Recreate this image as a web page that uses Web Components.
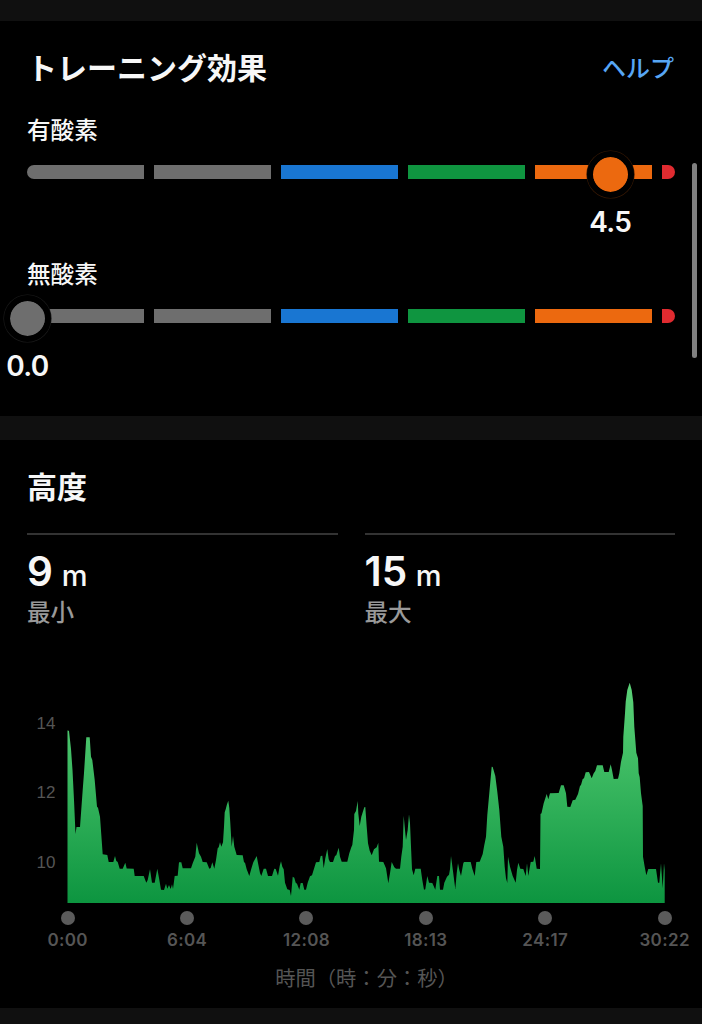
<!DOCTYPE html>
<html lang="ja">
<head>
<meta charset="utf-8">
<title>トレーニング効果</title>
<style>
    body {
        margin: 0;
        background: #000;
        color: #f7f7f7;
        font-family: Inter, "Noto Sans CJK JP", sans-serif;
    }
</style>
</head>
<body>
<activity-page>
    <stat-section heading="トレーニング効果" class="effect">
        <a slot="action">ヘルプ</a>
        <effect-meter label="有酸素" value="4.5" color="#ec690f"></effect-meter>
        <effect-meter label="無酸素" value="0.0" color="#6e6e6e"></effect-meter>
    </stat-section>
    <stat-section heading="高度" class="altitude">
        <stat-pair>
            <stat-value value="9" unit="m">最小</stat-value>
            <stat-value value="15" unit="m">最大</stat-value>
        </stat-pair>
        <altitude-chart>時間（時：分：秒）</altitude-chart>
    </stat-section>
</activity-page>

<script>
class ActivityPage extends HTMLElement {
    constructor() {
        super();
        this.attachShadow({ mode: 'open' });
    }

    connectedCallback() {
        this.shadowRoot.innerHTML = `
            <style>
                :host {
                    display: flex;
                    flex-direction: column;
                    gap: 24px;
                    position: relative;
                    box-sizing: border-box;
                    height: 1024px;
                    padding: 21px 0 16px;
                    background: #101010;
                    overflow: hidden;
                }
                ::slotted(.effect) {
                    height: 395px;
                }
                ::slotted(.altitude) {
                    height: 568px;
                }
                .scrollbar {
                    position: absolute;
                    top: 163px;
                    right: 5px;
                    width: 5.5px;
                    height: 195px;
                    border-radius: 3px;
                    background: #808080;
                }
            </style>
            <slot></slot>
            <div class="scrollbar"></div>
        `;
    }
}

class StatSection extends HTMLElement {
    constructor() {
        super();
        this.attachShadow({ mode: 'open' });
    }

    connectedCallback() {
        this.shadowRoot.innerHTML = `
            <style>
                :host {
                    display: block;
                    box-sizing: border-box;
                    padding: 27px 27px 0;
                    background: #000;
                }
                header {
                    display: flex;
                    justify-content: space-between;
                    align-items: center;
                    height: 40px;
                }
                h2 {
                    margin: 0;
                    font-size: 30px;
                    line-height: 40px;
                    font-weight: 700;
                }
                ::slotted(a) {
                    padding: 2px 1px 0 0;
                    font-size: 24px;
                    line-height: 40px;
                    font-weight: 500;
                    color: #57a6f5;
                }
            </style>
            <header>
                <h2>${this.getAttribute('heading')}</h2>
                <slot name="action"></slot>
            </header>
            <slot></slot>
        `;
    }
}

class EffectMeter extends HTMLElement {
    constructor() {
        super();
        this.attachShadow({ mode: 'open' });
    }

    connectedCallback() {
        const value = this.getAttribute('value');
        const color = this.getAttribute('color');
        // full scale is 5.0, the red cap starts just after it
        const left = Number(value) / 5 * 647.5;
        this.shadowRoot.innerHTML = `
            <style>
                :host {
                    display: block;
                    height: 144px;
                }
                .label {
                    height: 32px;
                    padding: 27px 0 18px;
                    font-size: 23.6px;
                    line-height: 32px;
                    font-weight: 500;
                }
                .track {
                    position: relative;
                    display: flex;
                    gap: 9.6px;
                    height: 14px;
                }
                .track i {
                    flex: 1;
                    background: #6e6e6e;
                }
                .track i:nth-child(1) { border-radius: 7px 0 0 7px; }
                .track i:nth-child(3) { background: #1976d2; }
                .track i:nth-child(4) { background: #0f9540; }
                .track i:nth-child(5) { background: #ec690f; }
                .track i:nth-child(6) {
                    flex: 0 0 13px;
                    border-radius: 0 7px 7px 0;
                    background: #e02b30;
                }
                .knob {
                    position: absolute;
                    top: -14.5px;
                    box-sizing: border-box;
                    width: 47px;
                    height: 47px;
                    margin-left: -23.2px;
                    border: 6px solid #000;
                    border-radius: 50%;
                    background: ${color};
                    background-clip: padding-box;
                    box-shadow: 0 0 0 0.6px color-mix(in srgb, ${color} 25%, #000);
                }
                .value {
                    position: absolute;
                    top: 40px;
                    width: 80px;
                    margin-left: -39.5px;
                    text-align: center;
                    font-size: 28px;
                    line-height: 34px;
                    font-weight: 600;
                    letter-spacing: -0.6px;
                }
            </style>
            <div class="label">${this.getAttribute('label')}</div>
            <div class="track">
                <i></i><i></i><i></i><i></i><i></i><i></i>
                <div class="knob" style="left: ${left}px"></div>
                <div class="value" style="left: ${left}px">${value}</div>
            </div>
        `;
    }
}

class StatPair extends HTMLElement {
    constructor() {
        super();
        this.attachShadow({ mode: 'open' });
    }

    connectedCallback() {
        this.shadowRoot.innerHTML = `
            <style>
                :host {
                    display: grid;
                    grid-template-columns: 1fr 1fr;
                    gap: 27px;
                    margin-top: 26px;
                    height: 147px;
                }
            </style>
            <slot></slot>
        `;
    }
}

class StatValue extends HTMLElement {
    constructor() {
        super();
        this.attachShadow({ mode: 'open' });
    }

    connectedCallback() {
        this.shadowRoot.innerHTML = `
            <style>
                :host {
                    display: block;
                    border-top: 2px solid #333;
                }
                .value {
                    height: 46px;
                    padding-top: 14px;
                    font-size: 40.5px;
                    line-height: 46px;
                    font-weight: 600;
                    white-space: pre;
                }
                .unit {
                    margin-left: 1px;
                    font-size: 29px;
                    font-weight: 500;
                }
                .label {
                    padding-top: 2px;
                    font-size: 23.6px;
                    line-height: 32px;
                    font-weight: 500;
                    color: #999;
                }
            </style>
            <div class="value">${this.getAttribute('value')}<span class="unit"> ${this.getAttribute('unit')}</span></div>
            <div class="label"><slot></slot></div>
        `;
    }
}

// x,y pairs of the altitude profile
const PROFILE = `
    68,730.5 69,731 71,749 72.5,770 74,800 75.5,834 76.5,827 80,827 82.7,790 84,773
    86.3,737.3 89.7,737.3 91,756.7 92.3,760 94.7,780 97,806.7 98,807.7 100,816.7 102.7,854.3 107.3,855
    108.7,862 113.3,862 115,856 116.3,861 117.7,862 119.7,868.7 122.7,868.7 125.3,862.7 126.7,868.5 133.7,868.7
    134.7,876 143.7,876 146.3,882.7 147.7,880 150,869.3 152,882.7 154.7,882.7 157.3,868.7 159,878 161,889.7
    164,890 166,883.7 167.3,888.7 169,885 170.7,889 172,884.3 173,889 174.7,876 177.7,875.7 179,862.3
    181.3,862.3 182.7,868.3 191,868.3 192.7,863.3 195.3,856.7 196.7,842.7 199,853.3 201,856.7 202.7,862 206.7,862.3
    209.3,868.7 210.7,868 212.3,862.3 214.3,868.7 216,860 217.7,848.3 218.7,847.3 220,842.3 221.3,846.7 223,842.3
    224,826.7 224.7,812.3 225.7,809.3 227,804.3 228.3,800.7 229.3,808 230.3,823 231.7,846.7 233,836 234.3,846.7
    236.7,855 242.7,855.3 244,862.3 245,862.7 246.7,869.3 249.3,876 251.3,868.7 253.3,862.3 256.7,856 258,863
    260,873 261.3,876 263.7,868.7 266,868.7 268,876 272,876 274.3,868.7 275.7,869 278,875.7 279.7,866
    281,861.3 282.3,866.7 283.7,869.3 285,882.7 287.3,889.3 289.7,890 291,896 292.7,876.7 294.3,877.7 295.7,882.7
    297,883.7 299.3,889.7 300.7,883 302.7,883 304.3,889.7 306,889.7 307.7,882.7 310,876.3 312,875.3 314,868.7
    316,862.3 319.3,862 320.7,856 322.3,855.7 323.7,868.3 325.3,858.3 327.3,849 328.7,859.3 330,862 333,862
    335,856 336.3,855.3 338.7,847.7 340,856.7 341.7,861.7 347.3,861.7 349.3,853.3 351.3,847.3 352.3,845 354,830
    354.3,814 356,811 357.7,801 358.3,813.3 359.7,826 361.3,816.7 364.3,807.3 365.3,807 366.7,826.7 368,843.3
    369.7,850.7 371.7,855.3 374,849.3 376.7,847.3 378.3,842.7 379,861.7 383.3,862 386,868.3 388.3,883.3 390,873.3
    391.7,862 394.3,867.3 396,868.7 400,868.7 401.3,856.7 402.7,846.7 403.7,815.7 405,830 406,840 407.7,830
    409,814.3 410,823.3 411,846.7 412,869.3 413.7,875.3 415.3,868.7 420.7,868.7 422.3,880 424,889.7 425.3,889.3
    426.7,880 427.3,876 429,882.7 432.3,883 435.3,889.7 437.3,876 439,876 440,889.7 443,889.7 444.3,882.7
    447,876.7 449,874.7 450,869.3 451,856 452.7,869 455.3,889 456.7,873.3 458,863.3 459.3,870 461,876
    463.3,863.3 464,862 470.7,862 472.3,868.7 474.7,876 476.3,862 479.7,861.7 482.7,854 484.3,845 486,836.7
    487.3,815 489.3,793.3 491.7,766.7 492.7,767 495.3,776 497.3,791.7 499.3,810 501.3,836.7 503.3,846.7 504.7,866.7
    506,878.3 507.3,883 508,856.7 510,866.7 512.7,876 515.7,882.7 517,870 518.3,862.7 520.3,868.7 523.3,869
    525.7,876 527,863.3 528.3,876 530.7,862 533.3,861.7 534.7,856 536.7,868.7 540,869 540.5,814 541.5,813.3
    543.7,803.3 546.7,794 548.3,799.3 550,793.3 558.7,793 561,785.3 563.7,785.3 566,793.3 567.3,806.7 570.3,807
    572.7,800.3 575.3,799.7 578,794 580,786 581,785 582.7,779 584,778.3 585.7,772.3 589,772 591.7,778.3
    593.7,773.3 595.3,771 597,765.3 602.7,765.3 604.3,772 608.7,772 610.7,764.3 612,770 613.7,779 618,778.7
    619.3,773.3 621,761.7 623,752.7 623.3,736.7 625,713.3 625.7,701.7 627.3,690 629.7,682.7 631.7,690 633.3,702.3
    634.3,726.7 636.3,752.7 638,758.3 638.7,773.3 639.7,777.3 641,793.3 642.7,806 643,856.7 644.7,866.7 646.3,875.3
    648.3,869 656,869 658,882.7 659.3,882.7 661,863.3 662.7,888.3 664,863.3 664.7,870
`;

class AltitudeChart extends HTMLElement {
    constructor() {
        super();
        this.attachShadow({ mode: 'open' });
    }

    connectedCallback() {
        const times = ['0:00', '6:04', '12:08', '18:13', '24:17', '30:22'];
        this.shadowRoot.innerHTML = `
            <style>
                :host {
                    display: block;
                    color: #555;
                }
                .plot {
                    display: flex;
                    height: 223px;
                }
                .y-axis {
                    display: flex;
                    flex-direction: column;
                    gap: 49.3px;
                    box-sizing: border-box;
                    width: 40px;
                    padding: 34px 11.5px 0 0;
                    text-align: right;
                    font: 17px/20px "Liberation Sans", sans-serif;
                }
                svg {
                    display: block;
                    flex: none;
                }
                .x-axis {
                    display: flex;
                    justify-content: space-between;
                    width: 657px;
                    margin: 8px 0 0 10.7px;
                }
                .tick {
                    display: flex;
                    flex-direction: column;
                    align-items: center;
                    width: 60px;
                    font-size: 17px;
                    line-height: 22px;
                    font-weight: 600;
                    letter-spacing: 0.35px;
                }
                .tick i {
                    width: 14px;
                    height: 14px;
                    margin-bottom: 4px;
                    border-radius: 50%;
                    background: #5b5b5b;
                }
                .title {
                    width: 597px;
                    margin: 15px 0 0 41px;
                    text-align: center;
                    font-size: 20.3px;
                    line-height: 26px;
                    font-weight: 400;
                }
            </style>
            <div class="plot">
                <div class="y-axis"><span>14</span><span>12</span><span>10</span></div>
                <svg width="598" height="223" viewBox="67 680 598 223">
                    <defs>
                        <linearGradient id="fill" gradientUnits="userSpaceOnUse" x1="0" y1="683" x2="0" y2="903">
                            <stop offset="0" stop-color="#5cd278"/>
                            <stop offset="1" stop-color="#0d9540"/>
                        </linearGradient>
                    </defs>
                    <polygon fill="url(#fill)" points="67.5,903 67.5,730.5 ${PROFILE.trim()} 664.7,903"/>
                </svg>
            </div>
            <div class="x-axis">
                ${times.map(t => `<div class="tick"><i></i><span>${t}</span></div>`).join('')}
            </div>
            <div class="title"><slot></slot></div>
        `;
    }
}

customElements.define('activity-page', ActivityPage);
customElements.define('stat-section', StatSection);
customElements.define('effect-meter', EffectMeter);
customElements.define('stat-pair', StatPair);
customElements.define('stat-value', StatValue);
customElements.define('altitude-chart', AltitudeChart);
</script>
</body>
</html>
